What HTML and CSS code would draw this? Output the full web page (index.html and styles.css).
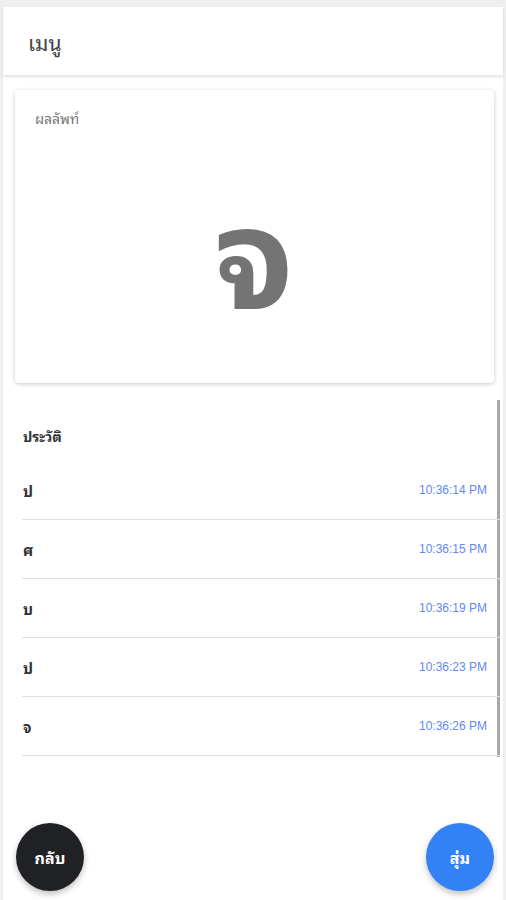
FILE: index.html
```html
<!DOCTYPE html>
<html lang="th">
<head>
    <meta charset="UTF-8">
    <meta name="viewport" content="width=device-width, initial-scale=1.0">
    <title>สุ่มตัวอักษร</title>
    <link rel="stylesheet" href="styles.css">
</head>
<body>
    <div class="app">
        <header class="topbar">
            <h1>เมนู</h1>
        </header>

        <div class="result-card">
            <div class="result-label">ผลลัพท์</div>
            <div class="result-letter">จ</div>
        </div>

        <section class="history">
            <h2>ประวัติ</h2>
            <ul class="history-list">
                <li><span class="letter">ป</span><span class="time">10:36:14 PM</span></li>
                <li><span class="letter">ศ</span><span class="time">10:36:15 PM</span></li>
                <li><span class="letter">บ</span><span class="time">10:36:19 PM</span></li>
                <li><span class="letter">ป</span><span class="time">10:36:23 PM</span></li>
                <li><span class="letter">จ</span><span class="time">10:36:26 PM</span></li>
            </ul>
        </section>

        <div class="actions">
            <button class="fab fab-back">กลับ</button>
            <button class="fab fab-random">สุ่ม</button>
        </div>
    </div>
</body>
</html>
```

FILE: styles.css
```css
html, body {
    margin: 0;
    padding: 0;
}
body {
    background-color: #efefef;
    font-family: "Noto Sans Thai Looped", "Noto Sans Thai", "Noto Sans", sans-serif;
    color: #333;
}
.app {
    margin: 7px 3px 0;
    background-color: white;
    height: 893px;
    display: flex;
    flex-direction: column;
}
.topbar {
    height: 68px;
    display: flex;
    align-items: center;
    padding: 0 25px;
    box-shadow: 0 2px 3px rgba(0,0,0,0.12);
    position: relative;
}
.topbar h1 {
    margin: 0;
    font-size: 21px;
    font-weight: normal;
    color: #444;
}
.result-card {
    margin: 15px 9px 0 12px;
    height: 293px;
    border-radius: 4px;
    box-shadow: 0 1px 4px rgba(0,0,0,0.22);
    display: flex;
    flex-direction: column;
    padding: 0 20px;
}
.result-label {
    margin-top: 16px;
    font-size: 14px;
    color: #777;
}
.result-letter {
    flex: 1;
    display: flex;
    align-items: center;
    justify-content: center;
    font-size: 140px;
    font-weight: bold;
    color: #747474;
    padding-bottom: 20px;
}
.history {
    margin: 17px 0 0 19px;
    border-right: 3px solid #a8a8a8;
    margin-right: 3px;
    height: 357px;
}
.history h2 {
    margin: 0;
    padding: 24px 0 0 1px;
    height: 37px;
    font-size: 14px;
    font-weight: bold;
    color: #333;
}
.history-list {
    list-style: none;
    margin: 0;
    padding: 0;
}
.history-list li {
    display: flex;
    justify-content: space-between;
    align-items: center;
    height: 58px;
    padding: 0 13px 0 1px;
    border-bottom: 1px solid #e0e0e0;
    margin-right: -3px;
}
.letter {
    font-size: 15px;
    font-weight: bold;
    color: #333;
}
.time {
    font-family: "Liberation Sans", Arial, sans-serif;
    font-size: 12px;
    color: #6288f2;
}
.actions {
    margin-top: auto;
    display: flex;
    justify-content: space-between;
    padding: 0 9px 9px 13px;
}
.fab {
    width: 68px;
    height: 68px;
    border-radius: 50%;
    border: none;
    color: white;
    font-family: "Noto Sans Thai Looped", "Noto Sans Thai", "Noto Sans", sans-serif;
    font-size: 16px;
    font-weight: bold;
    box-shadow: 0 3px 6px rgba(0,0,0,0.25);
    cursor: pointer;
}
.fab-back {
    background-color: #202124;
}
.fab-random {
    background-color: #3382f5;
}
```
